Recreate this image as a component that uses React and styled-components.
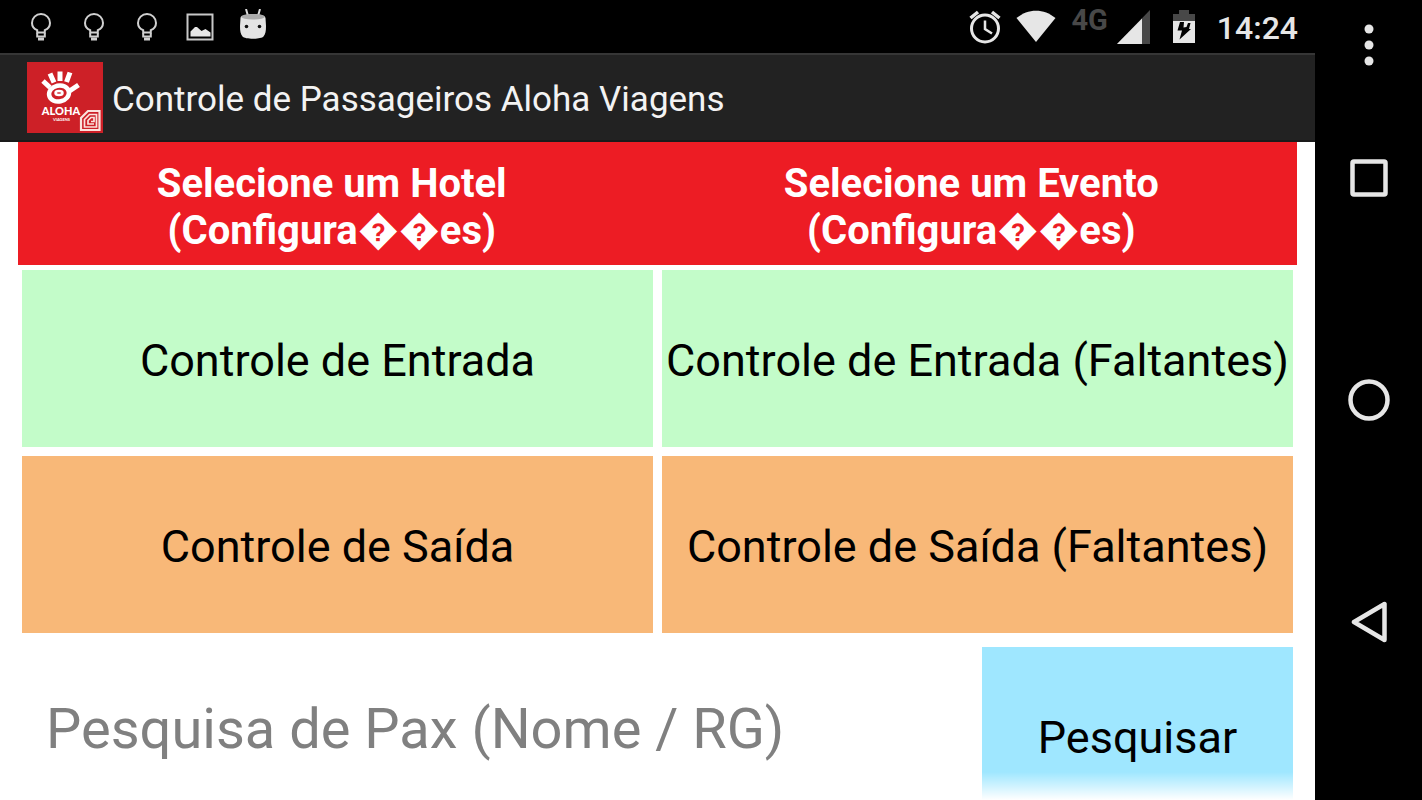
import styled, { createGlobalStyle } from "styled-components";

const GlobalStyle = createGlobalStyle`
  * {
    box-sizing: border-box;
  }
  body {
    margin: 0;
    background: #000;
    font-family: Roboto, sans-serif;
  }
  button {
    border: none;
    padding: 0;
    font-family: inherit;
    cursor: pointer;
  }
  svg {
    display: block;
    flex-shrink: 0;
  }
`;

const BulbIcon = () => (
  <svg width="22" height="30" viewBox="0 0 22 30" fill="none" stroke="#d0d0d0" strokeWidth="2">
    <path d="M7.2 20.5v-2.300C4 16.800 2 14.200 2 11a9 9 0 0 1 18 0c0 3.200-2 5.800-5.200 7.200v2.300z" />
    <path d="M7.200 21v3.500h7.600V21" />
    <path d="M8 27h6" strokeWidth="3" />
  </svg>
);

const PictureIcon = () => (
  <svg width="28" height="28" viewBox="0 0 28 28">
    <rect x="1.500" y="1.500" width="25" height="25" fill="none" stroke="#c8c8c8" strokeWidth="2" />
    <path d="M4.500 23.500v-5l4.500-4.500h2l4.500 4 4-2 5 3.500v4z" fill="#e6e6e6" />
  </svg>
);

const DroidIcon = () => (
  <svg width="28" height="36" viewBox="0 0 28 36">
    <path d="M7 0l2 7M21 0l-2 7" stroke="#dcdcdc" strokeWidth="2" />
    <path d="M1.500 9c0-5 25-5 25 0l.5 8c0 5-.5 8-2.500 10.500-2.500 3-18.500 3-21 0-2-2.500-2.500-5.500-2.500-10.500z" fill="#e4e4e4" />
    <ellipse cx="14" cy="7.800" rx="12" ry="2.800" fill="#aaa" />
    <circle cx="7.500" cy="17.500" r="1.800" fill="#111" />
    <circle cx="20.500" cy="17.500" r="1.800" fill="#111" />
  </svg>
);

const AlarmIcon = () => (
  <svg width="32" height="34" viewBox="0 0 32 34" fill="none" stroke="#e6e6e6">
    <circle cx="16" cy="18.500" r="13.500" strokeWidth="3" />
    <path d="M1.500 8l7.500-6M30.500 8l-7.500-6" strokeWidth="3.500" />
    <path d="M16 10.500v8.500l7 4.500" strokeWidth="2.500" />
  </svg>
);

const WifiIcon = () => (
  <svg width="40" height="34" viewBox="0 0 40 34">
    <path d="M0.500 8C12-1.800 28-1.800 39.500 8L20 32z" fill="#e6e6e6" />
  </svg>
);

const SignalIcon = () => (
  <svg width="34" height="34" viewBox="0 0 34 34">
    <path d="M0 34L33 0v34z" fill="#484848" />
    <path d="M0 34L25 8.500V34z" fill="#e6e6e6" />
  </svg>
);

const BatteryIcon = () => (
  <svg width="22" height="34" viewBox="0 0 22 34">
    <path d="M0 4h6V0h10v4h6v8H0z" fill="#484848" />
    <path d="M0 11h22v22H0z" fill="#e6e6e6" />
    <path d="M7 12h4l-.5 5.500 3-.5 1.500-4h2.500l-1.500 6h2L6.500 29.500l2.500-9H4.500z" fill="#000" />
  </svg>
);

const AlohaLogo = () => (
  <svg width="76" height="72" viewBox="0 0 76 72" role="img" aria-label="Aloha">
    <rect width="76" height="71" fill="#cd2027" />
    <g stroke="#fff" strokeWidth="5">
      <path d="M16 19l7 6.500M23 11.500l4 9M33 9.500v9.500M43 10.500l-3.500 9.500M51.500 23l-9 6" />
    </g>
    <ellipse cx="32" cy="31.500" rx="10" ry="8" fill="#cd2027" stroke="#fff" strokeWidth="4.500" transform="rotate(-12 32 31.500)" />
    <ellipse cx="32" cy="31" rx="3.500" ry="2" fill="none" stroke="#fff" strokeWidth="2.500" />
    <text x="34" y="53" fill="#fff" fontSize="11" fontWeight="900" fontFamily="Lato, sans-serif" textAnchor="middle">ALOHA</text>
    <text x="34.500" y="59" fill="#fff" fontSize="4" fontWeight="700" fontFamily="Lato, sans-serif" textAnchor="middle">VIAGENS</text>
    <g fill="none" stroke="#fbe3dc">
      <path d="M54 68V56l7-7h11.500v19z" fill="#cd2027" strokeWidth="2.200" />
      <path d="M57.500 65V57.500l5-5h7V65z" strokeWidth="1.700" />
      <path d="M67 62h-6v-3.500l3-3h3v4h-3" strokeWidth="1.700" />
    </g>
  </svg>
);

const App = () => {
  return (
    <Device>
      <GlobalStyle />
      <Screen>
        <StatusBar>
          <Notifications>
            <BulbIcon />
            <BulbIcon />
            <BulbIcon />
            <PictureIcon />
            <DroidIcon />
          </Notifications>
          <Status>
            <AlarmIcon />
            <WifiIcon />
            <Signal>
              <Network>4G</Network>
              <SignalIcon />
            </Signal>
          </Status>
          <BatteryIcon />
          <Clock>14:24</Clock>
        </StatusBar>
        <AppBar>
          <AlohaLogo />
          <AppTitle>Controle de Passageiros Aloha Viagens</AppTitle>
        </AppBar>
        <Content>
          <Selection>
            <SelectionText>
              Selecione um Hotel
              <br />
              (Configura{"\uFFFD\uFFFD"}es)
            </SelectionText>
            <SelectionText>
              Selecione um Evento
              <br />
              (Configura{"\uFFFD\uFFFD"}es)
            </SelectionText>
          </Selection>
          <Tiles>
            <Tile $color="#c3fcc9">Controle de Entrada</Tile>
            <Tile $color="#c3fcc9">Controle de Entrada (Faltantes)</Tile>
            <Tile $color="#f8b878">Controle de Saída</Tile>
            <Tile $color="#f8b878">Controle de Saída (Faltantes)</Tile>
          </Tiles>
          <Search onSubmit={(e) => e.preventDefault()}>
            <SearchInput
              type="text"
              aria-label="Pesquisa de Pax"
              placeholder="Pesquisa de Pax (Nome / RG)"
            />
            <Tile $color="#9fe7ff">Pesquisar</Tile>
          </Search>
        </Content>
        <Fade />
      </Screen>
      <NavBar>
        <NavButton $menu aria-label="Menu">
          <svg width="10" height="42" viewBox="0 0 10 42" fill="#e6e6e6">
            <circle cx="5" cy="5" r="4.500" />
            <circle cx="5" cy="21" r="4.500" />
            <circle cx="5" cy="37" r="4.500" />
          </svg>
        </NavButton>
        <NavButton aria-label="Recentes">
          <svg width="38" height="38" viewBox="0 0 38 38">
            <rect x="2.500" y="2.500" width="33" height="33" rx="1.500" fill="none" stroke="#e6e6e6" strokeWidth="4.500" />
          </svg>
        </NavButton>
        <NavButton aria-label="Início">
          <svg width="42" height="42" viewBox="0 0 42 42">
            <circle cx="21" cy="21" r="18.500" fill="none" stroke="#e6e6e6" strokeWidth="4.500" />
          </svg>
        </NavButton>
        <NavButton aria-label="Voltar">
          <svg width="38" height="42" viewBox="0 0 38 42">
            <path d="M34.500 3v36L4 21z" fill="none" stroke="#e6e6e6" strokeWidth="4.500" strokeLinejoin="round" />
          </svg>
        </NavButton>
      </NavBar>
    </Device>
  );
};

const Device = styled.div`
  display: flex;
  height: 100vh;
`;

const Screen = styled.div`
  position: relative;
  flex: 1;
  min-width: 0;
  display: flex;
  flex-direction: column;
  background: #fff;
`;

const StatusBar = styled.header`
  display: flex;
  align-items: center;
  gap: 22px;
  flex-shrink: 0;
  height: 53px;
  padding: 0 17px 0 14px;
  background: #000;
`;

const Notifications = styled.div`
  display: grid;
  grid-template-columns: repeat(5, 53px);
  align-items: center;
  justify-items: center;
  flex: 1;
`;

const Status = styled.div`
  display: flex;
  align-items: center;
  gap: 15px;
`;

const Signal = styled.div`
  display: flex;
  gap: 9px;
`;

const Network = styled.span`
  color: #484848;
  font-size: 29px;
  font-weight: 700;
  line-height: 20px;
`;

const Clock = styled.time`
  padding-top: 2px;
  color: #e6e6e6;
  font-size: 32px;
  font-weight: 500;
`;

const AppBar = styled.div`
  display: flex;
  align-items: center;
  gap: 9px;
  flex-shrink: 0;
  height: 89px;
  padding: 0 27px;
  background: #222;
  border-top: 2px solid #363636;
  border-bottom: 2px solid #1a1a1a;
`;

const AppTitle = styled.h1`
  margin: 0;
  padding-top: 3px;
  color: #f3f3f3;
  font-size: 35px;
  font-weight: 400;
`;

const Content = styled.main`
  flex: 1;
  min-height: 0;
  padding: 0 18px;
  overflow-y: auto;
  scrollbar-width: none;
`;

const Selection = styled.section`
  display: grid;
  grid-template-columns: 1fr 1fr;
  padding: 18px 0 11px;
  background: #ed1c24;
`;

const SelectionText = styled.p`
  margin: 0;
  padding-right: 12px;
  color: #fff;
  font-size: 40px;
  font-weight: 700;
  line-height: 47px;
  text-align: center;
`;

const Tiles = styled.section`
  display: grid;
  grid-template-columns: 1fr 1fr;
  gap: 9px;
  padding: 5px 4px 14px;
`;

const Tile = styled.button`
  height: 177px;
  padding-top: 3px;
  background: ${(props) => props.$color};
  color: #000;
  font-size: 45px;
  white-space: nowrap;
`;

const Search = styled.form`
  display: grid;
  grid-template-columns: 1fr 311px;
  padding: 0 4px;
`;

const SearchInput = styled.input`
  min-width: 0;
  padding: 0 24px 14px;
  border: none;
  outline: none;
  background: transparent;
  color: #000;
  font-family: inherit;
  font-size: 56px;
  &::placeholder {
    color: #808080;
    opacity: 1;
  }
`;

/* fading edge over the scrolled content */
const Fade = styled.div`
  position: absolute;
  right: 0;
  bottom: 0;
  left: 0;
  height: 28px;
  background: linear-gradient(rgba(255, 255, 255, 0), #fff);
  pointer-events: none;
`;

const NavBar = styled.nav`
  display: flex;
  flex-direction: column;
  width: 107px;
  padding-bottom: 67px;
  background: #000;
`;

const NavButton = styled.button`
  display: flex;
  align-items: center;
  justify-content: center;
  flex: ${(props) => (props.$menu ? "0 0 67px" : "1")};
  padding-top: ${(props) => (props.$menu ? "22px" : "0")};
  background: transparent;
`;

export default App;
